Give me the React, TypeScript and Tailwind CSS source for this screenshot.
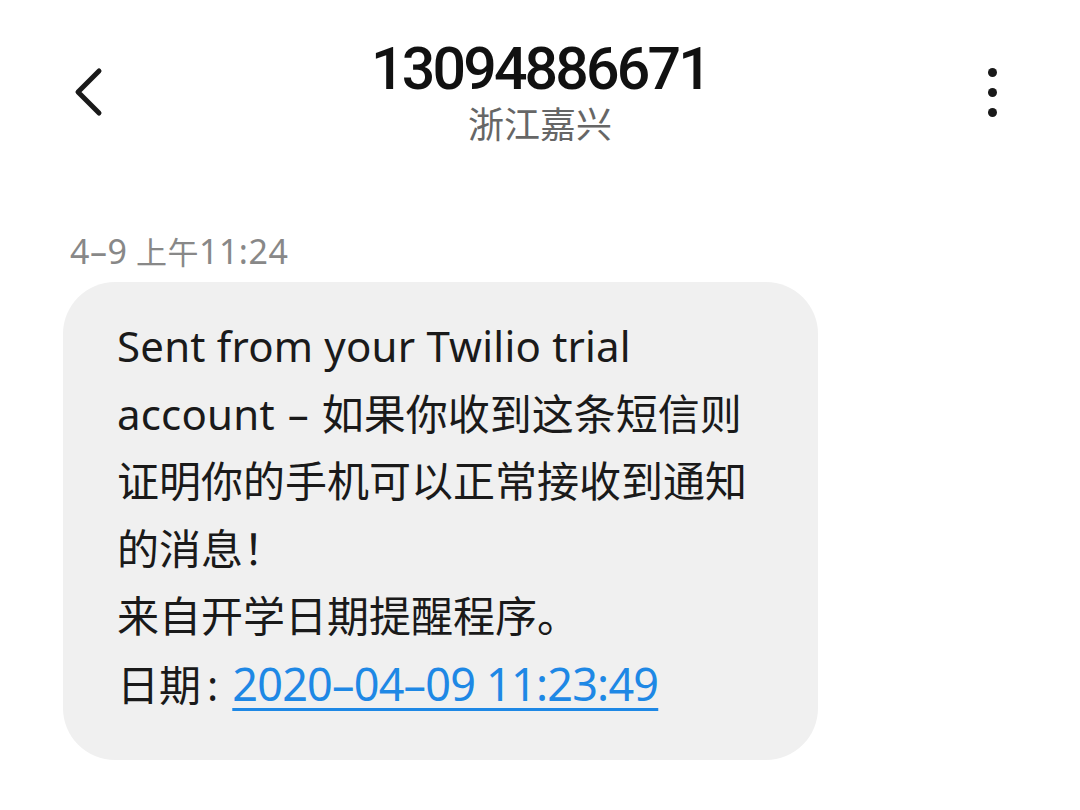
import React from "react";

export default function App() {
  const cjk = { fontFamily: '"Noto Sans", "Noto Sans CJK SC", sans-serif' } as React.CSSProperties;
  return (
    <div className="w-[1080px] h-[810px] bg-white overflow-hidden relative" style={cjk}>
      <div className="relative h-[160px]">
        <div className="absolute left-[69px] top-[66px]">
          <svg width="40" height="52" viewBox="0 0 40 52">
            <path d="M30 5 L9 26 L30 47" fill="none" stroke="#1a1a1a" strokeWidth="5" strokeLinecap="round" strokeLinejoin="round" />
          </svg>
        </div>
        <div className="absolute right-[83px] top-[68px] flex flex-col gap-[11px]">
          <div className="w-[9px] h-[9px] rounded-full bg-[#1a1a1a]" />
          <div className="w-[9px] h-[9px] rounded-full bg-[#1a1a1a]" />
          <div className="w-[9px] h-[9px] rounded-full bg-[#1a1a1a]" />
        </div>
        <div className="flex flex-col items-center pt-[39px]">
          <div
            className="text-[59px] leading-[60px] font-medium tracking-[-2.8px] text-[#111]"
            style={{ fontFamily: 'Roboto, "Noto Sans", sans-serif' }}
          >
            13094886671
          </div>
          <div className="text-[36px] leading-[44px] text-[#666] mt-[4px]">浙江嘉兴</div>
        </div>
      </div>
      <div className="pl-[70px] pt-[71px] text-[31px] leading-[40px] text-[#888] tracking-[0.5px]">
        <span className="text-[34px]">4–9</span> 上午<span className="text-[34px]">11:24</span>
      </div>
      <div className="ml-[63px] mt-[10px] w-[755px] rounded-[52px] bg-[#f0f0f0] pl-[54px] pr-[40px] pt-[30px] pb-[42px] text-[42px] leading-[67.5px] text-[#1a1a1a]">
        <div className="whitespace-nowrap tracking-[0.2px]">Sent from your Twilio trial</div>
        <div className="whitespace-nowrap">
          <span className="tracking-[0.2px]">account</span>
          <span className="mx-[13px]">–</span>如果你收到这条短信则
        </div>
        <div className="whitespace-nowrap">证明你的手机可以正常接收到通知</div>
        <div className="whitespace-nowrap">的消息！</div>
        <div className="whitespace-nowrap">来自开学日期提醒程序。</div>
        <div className="whitespace-nowrap">
          日期<span className="ml-[6px] mr-[14px]">:</span>
          <span className="text-[#1e88e5] underline underline-offset-[7px] decoration-[3px] text-[45px] tracking-[-0.8px]">2020–04–09 11:23:49</span>
        </div>
      </div>
    </div>
  );
}
